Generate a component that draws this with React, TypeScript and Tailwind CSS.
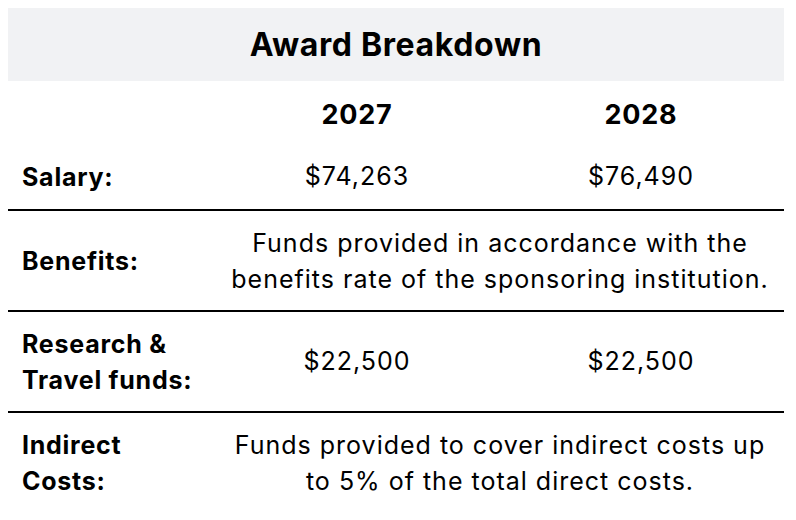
const rows = [
  { label: "Salary:", a: "$74,263", b: "$76,490" },
  {
    label: "Benefits:",
    span: "Funds provided in accordance with the benefits rate of the sponsoring institution.",
  },
  { label: "Research & Travel funds:", a: "$22,500", b: "$22,500" },
  {
    label: "Indirect Costs:",
    span: "Funds provided to cover indirect costs up to 5% of the total direct costs.",
  },
];

export default function App() {
  return (
    <div className="min-h-screen bg-white p-2 text-black" style={{ fontFamily: "Inter, sans-serif" }}>
      <table className="w-[776px] table-fixed border-collapse">
        <colgroup>
          <col className="w-[208px]" />
          <col className="w-[282px]" />
          <col className="w-[286px]" />
        </colgroup>
        <thead>
          <tr className="h-[73px] bg-[#f1f2f4]">
            <th colSpan={3} className="text-center text-[32px] font-bold tracking-[0.02em]">
              Award Breakdown
            </th>
          </tr>
          <tr className="h-[64px]">
            <th />
            <th className="pt-1 text-center text-[27px] font-bold tracking-[0.03em]">2027</th>
            <th className="pt-1 text-center text-[27px] font-bold tracking-[0.03em]">2028</th>
          </tr>
        </thead>
        <tbody>
          {rows.map((r, i) => (
            <tr
              key={r.label}
              className={`${i === 0 ? "h-[65px]" : "h-[101px]"} ${i < rows.length - 1 ? "border-b-2 border-black" : ""}`}
            >
              <td className="pl-[14px] pr-[20px] text-[25px] font-bold leading-[36px] tracking-[0.03em]">
                {r.label}
              </td>
              {r.span ? (
                <td colSpan={2} className="px-3 text-center text-[25px] leading-[36px] tracking-[0.04em]">
                  {r.span}
                </td>
              ) : (
                <>
                  <td className="text-center text-[25px] tracking-[0.04em]">{r.a}</td>
                  <td className="text-center text-[25px] tracking-[0.04em]">{r.b}</td>
                </>
              )}
            </tr>
          ))}
        </tbody>
      </table>
    </div>
  );
}
